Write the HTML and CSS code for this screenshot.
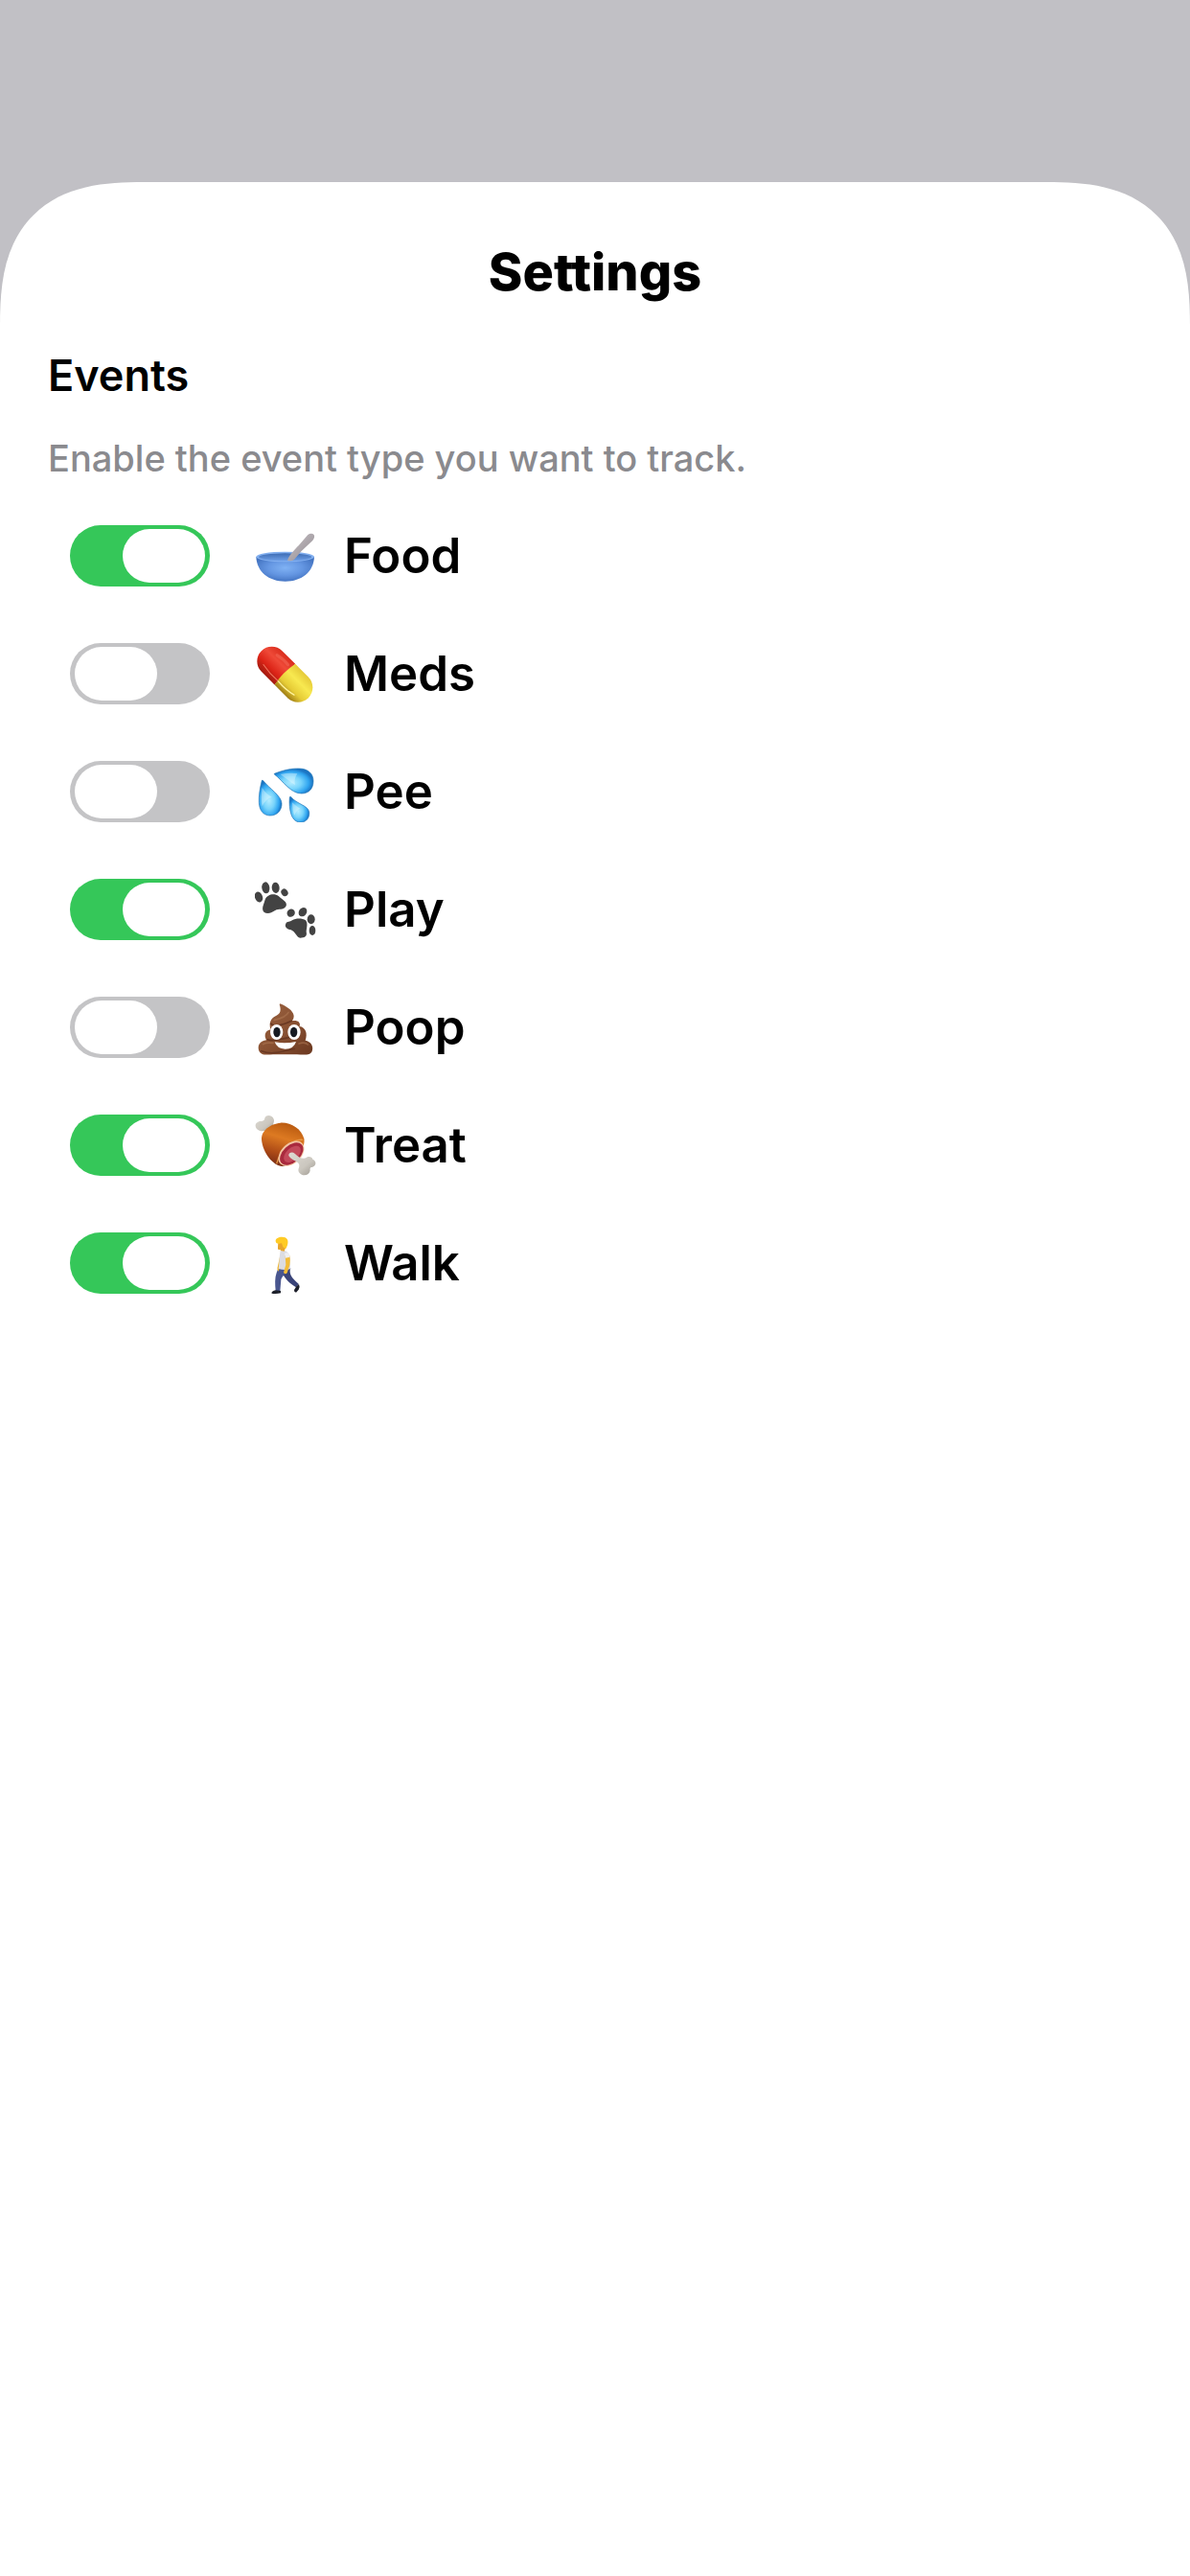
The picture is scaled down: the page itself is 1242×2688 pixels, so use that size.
FILE: index.html
```html
<!DOCTYPE html>
<html lang="en">
<head>
<meta charset="utf-8">
<meta name="viewport" content="width=device-width, initial-scale=1">
<title>Settings</title>
<link rel="stylesheet" href="styles.css">
</head>
<body>
<main class="sheet">
  <h1 class="sheet-title">Settings</h1>
  <h2 class="section-title">Events</h2>
  <p class="section-hint">Enable the event type you want to track.</p>
  <ul class="event-list">
    <li class="event">
      <input class="switch" type="checkbox" role="switch" id="food" checked>
      <label class="event-label" for="food">
        <svg class="event-icon" viewBox="618 54 192 192" aria-hidden="true">
          <defs>
            <radialGradient id="bowl" cx=".5" cy=".45" r=".6"><stop offset="0" stop-color="#80b2f4"/><stop offset=".5" stop-color="#6496e2"/><stop offset="1" stop-color="#3f6fbd"/></radialGradient>
            <linearGradient id="inner" x1="0" x2="0" y1="0" y2="1"><stop offset="0" stop-color="#3d6cb4"/><stop offset="1" stop-color="#6fa0e8"/></linearGradient>
            <linearGradient id="spoon" x1="0" x2="1" y1="0" y2="1"><stop offset="0" stop-color="#c9c3c7"/><stop offset="1" stop-color="#928b91"/></linearGradient>
          </defs>
          <path d="M622 153C624 200 661 230 713 230S802 200 804 153Z" fill="url(#bowl)"/>
          <ellipse cx="713" cy="153" rx="91" ry="16" fill="#83b0f0"/>
          <ellipse cx="713" cy="154" rx="83" ry="12" fill="url(#inner)"/>
          <path d="M720 164C727 146 745 128 755 118L784 84Q795 76 803 84Q807 92 799 102L764 135L741 162Q730 169 720 164Z" fill="url(#spoon)"/>
        </svg>
        <span>Food</span>
      </label>
    </li>
    <li class="event">
      <input class="switch" type="checkbox" role="switch" id="meds">
      <label class="event-label" for="meds">
        <svg class="event-icon" viewBox="618 48 192 192" aria-hidden="true">
          <defs>
            <linearGradient id="red" x1="0" x2="0" y1="0" y2="1"><stop offset="0" stop-color="#d92c1c"/><stop offset=".35" stop-color="#ef4a38"/><stop offset=".7" stop-color="#dc2417"/><stop offset="1" stop-color="#a11b10"/></linearGradient>
            <linearGradient id="yellow" x1="0" x2="0" y1="0" y2="1"><stop offset="0" stop-color="#e5ca38"/><stop offset=".35" stop-color="#f8e950"/><stop offset=".7" stop-color="#e6cc36"/><stop offset="1" stop-color="#9f7d14"/></linearGradient>
          </defs>
          <g transform="translate(712 146) rotate(45)">
            <path d="M0 -46H-58A46 46 0 0 0 -58 46H0Z" fill="url(#red)"/>
            <path d="M0 -46H58A46 46 0 0 1 58 46H0Q-9 0 0 -46Z" fill="url(#yellow)"/>
            <path d="M-69 26Q-35 33 0 30" fill="none" stroke="#f07a62" stroke-width="3" stroke-linecap="round"/>
            <path d="M1 30Q35 33 66 25" fill="none" stroke="#fff39b" stroke-width="4" stroke-linecap="round"/>
            <path d="M-60 -25Q-35 -31 -14 -28" fill="none" stroke="#f36653" stroke-width="9" stroke-linecap="round" opacity=".6"/>
          </g>
        </svg>
        <span>Meds</span>
      </label>
    </li>
    <li class="event">
      <input class="switch" type="checkbox" role="switch" id="pee">
      <label class="event-label" for="pee">
        <svg class="event-icon" viewBox="618 48 192 192" aria-hidden="true">
          <defs>
            <radialGradient id="drop" cx=".44" cy=".57" r=".55"><stop offset="0" stop-color="#b4ecff"/><stop offset=".45" stop-color="#78d4fb"/><stop offset=".8" stop-color="#30a5f0"/><stop offset="1" stop-color="#1b75c3"/></radialGradient>
          </defs>
          <g fill="url(#drop)" stroke="#2477b7" stroke-width="2">
            <path d="M679 88C708 76 735 71 758 72C785 73 801 88 801 111C801 135 787 150 764 150C730 150 707 111 679 90Z"/>
            <path d="M640 109C633 137 630 158 631 178C632 204 645 218 664 219C688 220 703 202 702 181C701 157 665 136 643 109Z"/>
            <path d="M727 161C725 182 727 201 732 216C738 233 749 241 763 240C780 239 790 225 788 208C785 187 750 184 730 160Z"/>
          </g>
          <g fill="#e8fbff" opacity=".4">
            <path d="M698 90Q728 84 751 88Q739 105 744 124Q722 108 698 90Z"/>
            <path d="M641 132Q652 151 671 161Q651 167 641 190Q636 166 641 132Z"/>
            <path d="M735 178Q748 191 760 197Q748 201 742 218Q735 204 735 178Z"/>
          </g>
        </svg>
        <span>Pee</span>
      </label>
    </li>
    <li class="event">
      <input class="switch" type="checkbox" role="switch" id="play" checked>
      <label class="event-label" for="play">
        <svg class="event-icon" viewBox="618 51 192 192" aria-hidden="true">
          <g fill="#434343">
            <ellipse cx="630" cy="108" rx="12" ry="17" transform="rotate(-20 630 108)"/>
            <ellipse cx="652" cy="79" rx="12" ry="18" transform="rotate(-8 652 79)"/>
            <ellipse cx="683" cy="79" rx="12" ry="17" transform="rotate(-6 683 79)"/>
            <ellipse cx="711" cy="94" rx="10" ry="12" transform="rotate(-38 711 94)"/>
            <path d="M650 116C656 99 680 95 692 105C700 112 708 118 714 124C722 136 711 147 697 146C682 145 675 157 659 159C639 158 641 142 645 132Z"/>
            <ellipse cx="731" cy="158" rx="12" ry="13" transform="rotate(42 731 158)"/>
            <ellipse cx="768" cy="155" rx="12" ry="15" transform="rotate(35 768 155)"/>
            <ellipse cx="794" cy="178" rx="12" ry="15"/>
            <ellipse cx="798" cy="213" rx="10" ry="15"/>
            <path d="M735 181C747 173 767 174 777 181C785 190 780 204 779 217C783 232 773 236 760 236C748 235 746 217 731 211C718 208 710 201 715 191C719 184 728 186 735 181Z"/>
          </g>
        </svg>
        <span>Play</span>
      </label>
    </li>
    <li class="event">
      <input class="switch" type="checkbox" role="switch" id="poop">
      <label class="event-label" for="poop">
        <svg class="event-icon" viewBox="618 54 192 192" aria-hidden="true">
          <defs>
            <linearGradient id="brown" x1="0" x2="1" y1="0" y2="1"><stop offset="0" stop-color="#9a6240"/><stop offset=".5" stop-color="#8a5233"/><stop offset="1" stop-color="#6b3820"/></linearGradient>
          </defs>
          <path d="M697 76C716 84 738 97 740 114C740 120 738 126 734 130C748 126 763 132 758 147C777 150 784 169 776 191C793 194 803 209 797 225C791 240 767 235 750 235H675C651 236 636 238 630 221C626 205 635 193 654 190C645 174 652 159 668 157C661 141 667 122 680 116C701 109 700 94 695 79Z" fill="url(#brown)"/>
          <g fill="none" stroke-linecap="round">
            <path d="M668 139C682 149 708 142 733 130M658 188C681 199 713 179 752 178M638 224C675 238 701 225 742 217" stroke="#693822" stroke-width="5"/>
            <path d="M679 127C697 123 716 118 723 103M644 203C652 197 665 198 675 199M756 201Q774 195 784 204" stroke="#b07a55" stroke-width="5" opacity=".55"/>
          </g>
          <g fill="#fff">
            <ellipse cx="686" cy="165" rx="20" ry="24"/>
            <ellipse cx="741" cy="165" rx="20" ry="24"/>
            <path d="M680 196Q713 202 747 195Q740 218 713 218Q688 218 680 196Z"/>
          </g>
          <ellipse cx="687" cy="165" rx="11" ry="16" fill="#171b22"/>
          <ellipse cx="740" cy="165" rx="11" ry="16" fill="#171b22"/>
        </svg>
        <span>Poop</span>
      </label>
    </li>
    <li class="event">
      <input class="switch" type="checkbox" role="switch" id="treat" checked>
      <label class="event-label" for="treat">
        <svg class="event-icon" viewBox="618 54 192 192" aria-hidden="true">
          <defs>
            <linearGradient id="meat" x1=".6" y1="0" x2=".3" y2="1"><stop offset="0" stop-color="#b95a10"/><stop offset=".35" stop-color="#dd7a22"/><stop offset=".7" stop-color="#ad4a16"/><stop offset="1" stop-color="#742a15"/></linearGradient>
            <linearGradient id="bone" x1="0" x2="1" y1="0" y2="1"><stop offset="0" stop-color="#dedad3"/><stop offset=".6" stop-color="#cbc7bf"/><stop offset="1" stop-color="#9c978e"/></linearGradient>
          </defs>
          <path d="M648 70C648 53 672 53 677 68C681 77 672 84 677 91L660 108C652 99 646 109 632 104C617 98 616 82 628 77C636 73 642 78 648 70Z" fill="url(#bone)"/>
          <path d="M639 132C637 104 667 83 698 80C731 78 764 99 772 130C778 160 742 210 704 216C675 215 642 173 639 132Z" fill="url(#meat)"/>
          <path d="M768 133C740 130 698 159 686 208" fill="none" stroke="#e79a48" stroke-width="4"/>
          <ellipse cx="732" cy="176" rx="47" ry="31" transform="rotate(-43 732 176)" fill="#f3c5a3"/>
          <ellipse cx="733" cy="177" rx="43" ry="27" transform="rotate(-43 733 177)" fill="#a92a3e"/>
          <ellipse cx="735" cy="178" rx="32" ry="19" transform="rotate(-43 735 178)" fill="#c34a5b"/>
          <path d="M724 183C723 174 734 169 743 176C754 187 766 194 778 190C783 184 797 184 799 194C812 199 811 216 797 219C792 219 790 221 791 230C787 246 767 248 758 237C748 226 762 218 755 207C748 198 730 195 724 183Z" fill="url(#bone)"/>
        </svg>
        <span>Treat</span>
      </label>
    </li>
    <li class="event">
      <input class="switch" type="checkbox" role="switch" id="walk" checked>
      <label class="event-label" for="walk">
        <svg class="event-icon" viewBox="618 48 192 192" aria-hidden="true">
          <path d="M707 162L730 160C724 175 731 190 755 209L747 220C725 207 710 190 704 175Z" fill="#3a4479"/>
          <path d="M748 217L756 210Q760 218 755 227L747 236Q740 235 741 228Z" fill="#1d202a"/>
          <path d="M691 161L722 162C715 177 703 185 700 196L697 232L683 231C681 210 680 191 686 174Z" fill="#49568f"/>
          <path d="M683 229L699 231V238Q684 241 671 239Q668 233 683 229Z" fill="#1d202a"/>
          <path d="M697 120L707 124L698 151L692 170Q686 164 690 153Z" fill="#efb52e"/>
          <path d="M698 105C713 102 726 110 728 126L729 163Q710 167 692 162C695 145 694 121 698 105Z" fill="#dcdce1"/>
          <path d="M713 120L727 121Q730 137 727 151L719 175Q713 182 708 173L715 149Z" fill="#f3bc37"/>
          <path d="M711 113Q726 108 728 125L714 128Z" fill="#efeff2"/>
          <path d="M691 78H714L715 94L710 107L699 105L697 101Q688 104 690 95Z" fill="#e9a52b"/>
          <path d="M683 76C682 64 700 60 713 64C725 70 723 85 715 99L706 94L702 82Q690 85 685 81Z" fill="#ffcb25"/>
        </svg>
        <span>Walk</span>
      </label>
    </li>
  </ul>
</main>
</body>
</html>
```
FILE: styles.css
```css
* {
  box-sizing: border-box;
}

body {
  margin: 0;
  min-height: 100vh;
  padding-top: 190px;
  display: flex;
  flex-direction: column;
  background: #c1c0c5;
  color: #000;
  font-family: Inter, "Liberation Sans", sans-serif;
}

.sheet {
  flex: 1;
  padding: 62px 50px;
  background: #fff;
  border-radius: 122px 122px 0 0;
}

/* Continuous corners where the browser can draw them */
@supports (corner-shape: superellipse(1.4)) {
  .sheet {
    border-radius: 150px 150px 0 0;
    corner-shape: superellipse(1.4);
  }
}

.sheet-title,
.section-title,
.section-hint {
  margin: 0;
}

.sheet-title {
  font-size: 54px;
  font-weight: 800;
  line-height: 64px;
  text-align: center;
}

.section-title {
  margin-top: 48px;
  font-size: 45px;
  font-weight: 600;
  line-height: 56px;
}

.section-hint {
  margin-top: 34px;
  color: #8a8a8e;
  font-size: 38px;
  font-weight: 500;
  line-height: 48px;
}

.event-list {
  margin: 46px 0 0;
  padding: 0 23px;
  display: flex;
  flex-direction: column;
  gap: 59px;
  list-style: none;
}

.event {
  display: flex;
  align-items: center;
  gap: 47px;
}

.event-label {
  display: flex;
  align-items: center;
  gap: 29px;
  font-size: 51px;
  font-weight: 600;
  line-height: 64px;
}

.event-icon {
  width: 64px;
  height: 64px;
}

.switch {
  appearance: none;
  flex: none;
  width: 146px;
  height: 64px;
  margin: 0;
  padding: 0 5px;
  display: flex;
  align-items: center;
  border-radius: 32px;
  background: #c4c4c6;
}

.switch::before {
  content: "";
  width: 86px;
  height: 56px;
  border-radius: 28px;
  background: #fff;
}

.switch:checked {
  justify-content: flex-end;
  background: #35c759;
}
```
